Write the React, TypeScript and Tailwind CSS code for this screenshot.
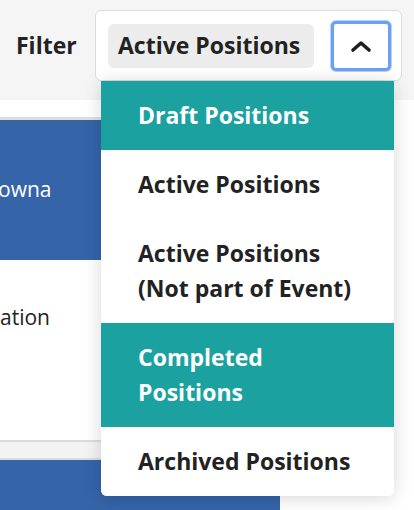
import React from "react";

const font = { fontFamily: '"Open Sans", "Noto Sans", sans-serif' };

export default function App() {
  const items: { label: React.ReactNode; active?: boolean }[] = [
    { label: "Draft Positions", active: true },
    { label: "Active Positions" },
    { label: <>Active Positions<br />(Not part of Event)</> },
    { label: <>Completed<br />Positions</>, active: true },
    { label: "Archived Positions" },
  ];
  return (
    <div className="w-[414px] h-[510px] overflow-hidden bg-white relative" style={font}>
      {/* header */}
      <div className="h-[100px] bg-[#f5f5f5] flex items-start pt-[10px] pl-[16px] relative z-10">
        <div className="h-[71px] flex items-center text-[23px] font-bold text-[#222] w-[79px]">Filter</div>
        <div className="relative w-[307px] h-[71px] bg-white border border-[#dcdcdc] rounded-[6px] flex items-center pl-[12px]">
          <div className="h-[44px] w-[206px] bg-[#ececec] rounded-[6px] flex items-center pl-[10px] text-[23px] font-bold text-[#222] whitespace-nowrap">
            Active Positions
          </div>
          <div className="ml-[17px] w-[60px] h-[50px] rounded-[5px] border-[3px] border-[#6aa1f6] bg-white flex items-center justify-center shadow-[0_0_0_1px_#b9d2fb]">
            <svg width="22" height="14" viewBox="0 0 22 14">
              <polyline points="3,11 11,4 19,11" fill="none" stroke="#1e1e1e" strokeWidth="3.6" strokeLinecap="round" strokeLinejoin="round" />
            </svg>
          </div>
          <div className="absolute top-[70px] left-[5px] w-[293px] bg-white rounded-b-[6px] shadow-[0_2px_18px_rgba(0,0,0,0.16)] overflow-hidden">
            {items.map((it, i) => (
              <div
                key={i}
                className={
                  "pl-[37px] pr-3 py-[17px] text-[23px] leading-[35px] font-bold " +
                  (it.active ? "bg-[#1ba19f] text-white" : "bg-white text-[#222]")
                }
              >
                {it.label}
              </div>
            ))}
          </div>
        </div>
      </div>
      {/* background content */}
      <div className="flex flex-col">
        <div className="h-[17px] bg-white" />
        <div className="h-[3px] bg-[#dedede] w-[280px]" />
        <div className="h-[140px] w-[280px] bg-[#3564a9] flex items-center text-white text-[21px] overflow-hidden">
          <span className="whitespace-nowrap -ml-[2px]">owna</span>
        </div>
        <div className="h-[180px] w-[280px] bg-white text-[#222] text-[21px] pt-[42px]">
          <span>ation</span>
        </div>
        <div className="h-[2px] bg-[#dcdcdc] w-[280px]" />
        <div className="h-[16px] bg-[#f3f3f3] w-[280px]" />
        <div className="h-[2px] bg-[#dcdcdc] w-[280px]" />
        <div className="h-[60px] w-[280px] bg-[#3564a9]" />
      </div>
    </div>
  );
}
